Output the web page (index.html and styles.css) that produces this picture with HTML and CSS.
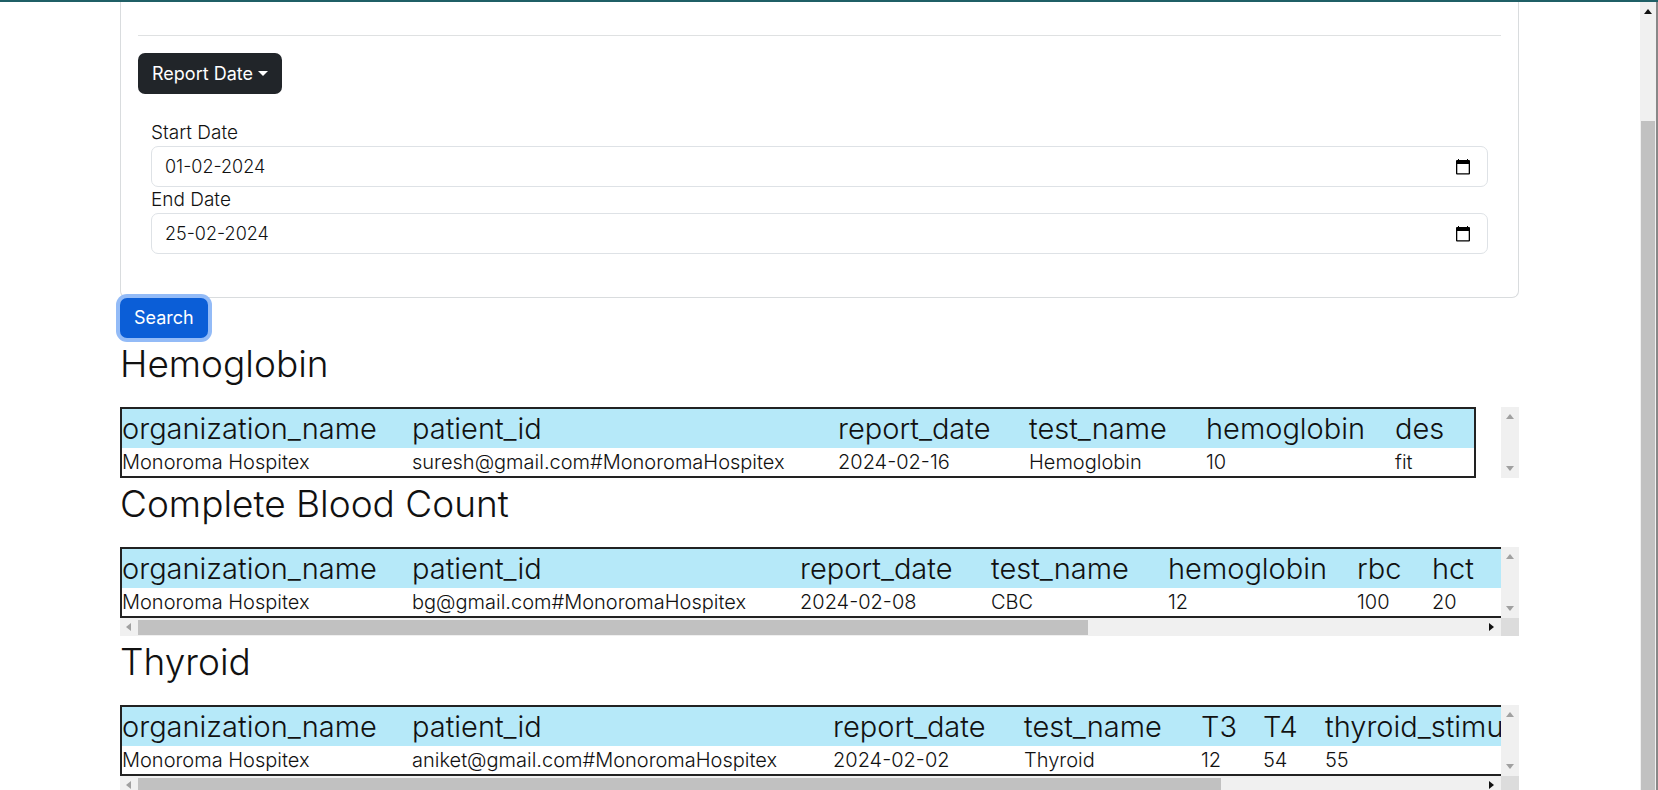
FILE: index.html
```html
<!DOCTYPE html>
<html lang="en">
<head>
<meta charset="utf-8">
<title>Report Search</title>
<link rel="stylesheet" href="styles.css">
</head>
<body>
<div class="page">
  <main class="content">
    <section class="filters">
      <hr class="divider">
      <button class="btn btn-dark" type="button">Report Date<span class="caret"></span></button>
      <div class="dates">
        <label class="label" for="start">Start Date</label>
        <div class="field">
          <input id="start" class="input" type="text" value="01-02-2024">
          <button class="picker" type="button" aria-label="Choose start date"><svg width="16" height="18" viewBox="0 0 16 18"><path fill="#000" fill-rule="evenodd" d="M3 1h1v1h8V1h1v1h1q1 0 1 1v12.500q0 1-1 1H2q-1 0-1-1V3q0-1 1-1h1zM2.300 6v9.200h11.400V6z"/></svg></button>
        </div>
        <label class="label" for="end">End Date</label>
        <div class="field">
          <input id="end" class="input" type="text" value="25-02-2024">
          <button class="picker" type="button" aria-label="Choose end date"><svg width="16" height="18" viewBox="0 0 16 18"><path fill="#000" fill-rule="evenodd" d="M3 1h1v1h8V1h1v1h1q1 0 1 1v12.500q0 1-1 1H2q-1 0-1-1V3q0-1 1-1h1zM2.300 6v9.200h11.400V6z"/></svg></button>
        </div>
      </div>
    </section>
    <button class="btn btn-search" type="button">Search</button>

    <h2 class="title">Hemoglobin</h2>
    <div class="scroller">
      <div class="view">
        <table class="report">
          <colgroup><col class="c-org"><col class="c-id-long"><col class="c-date"><col class="c-test"><col class="c-hemo"><col class="c-last"></colgroup>
          <thead><tr><th>organization_name</th><th>patient_id</th><th>report_date</th><th>test_name</th><th>hemoglobin</th><th>des</th></tr></thead>
          <tbody><tr><td>Monoroma Hospitex</td><td>suresh@gmail.com#MonoromaHospitex</td><td>2024-02-16</td><td>Hemoglobin</td><td>10</td><td>fit</td></tr></tbody>
        </table>
      </div>
      <div class="vbar" aria-hidden="true"><i class="arrow up"></i><i class="arrow down"></i></div>
    </div>

    <h2 class="title">Complete Blood Count</h2>
    <div class="scroller">
      <div class="view">
        <table class="report">
          <colgroup><col class="c-org"><col class="c-id-short"><col class="c-date"><col class="c-test"><col class="c-hemo"><col class="c-rbc"><col class="c-wide"></colgroup>
          <thead><tr><th>organization_name</th><th>patient_id</th><th>report_date</th><th>test_name</th><th>hemoglobin</th><th>rbc</th><th>hct</th></tr></thead>
          <tbody><tr><td>Monoroma Hospitex</td><td>bg@gmail.com#MonoromaHospitex</td><td>2024-02-08</td><td>CBC</td><td>12</td><td>100</td><td>20</td></tr></tbody>
        </table>
      </div>
      <div class="vbar" aria-hidden="true"><i class="arrow up"></i><i class="arrow down"></i></div>
      <div class="hbar" aria-hidden="true"><i class="arrow left"></i><div class="track"><div class="thumb" style="width:70.700%"></div></div><i class="arrow right"></i></div>
      <div class="corner"></div>
    </div>

    <h2 class="title">Thyroid</h2>
    <div class="scroller">
      <div class="view">
        <table class="report">
          <colgroup><col class="c-org"><col class="c-id"><col class="c-date"><col class="c-test"><col class="c-t"><col class="c-t"><col class="c-wide"></colgroup>
          <thead><tr><th>organization_name</th><th>patient_id</th><th>report_date</th><th>test_name</th><th>T3</th><th>T4</th><th>thyroid_stimulating</th></tr></thead>
          <tbody><tr><td>Monoroma Hospitex</td><td>aniket@gmail.com#MonoromaHospitex</td><td>2024-02-02</td><td>Thyroid</td><td>12</td><td>54</td><td>55</td></tr></tbody>
        </table>
      </div>
      <div class="vbar" aria-hidden="true"><i class="arrow up"></i><i class="arrow down"></i></div>
      <div class="hbar" aria-hidden="true"><i class="arrow left"></i><div class="track"><div class="thumb" style="width:80.600%"></div></div><i class="arrow right"></i></div>
      <div class="corner"></div>
    </div>
  </main>
  <div class="page-bar" aria-hidden="true"><i class="arrow up dark"></i><div class="page-thumb"></div></div>
</div>
</body>
</html>
```

FILE: styles.css
```css
* { box-sizing: border-box; }
body {
  margin: 0;
  background: #fff;
  color: #111;
  font: 300 18px/24px Inter, "Open Sans", sans-serif;
}
.page {
  display: flex;
  height: 100vh;
  overflow: hidden;
  border-top: 2px solid #1f5f66;
}
.content {
  flex: 1;
  min-width: 0;
  max-width: 1640px;
  padding: 0 121px 0 120px;
}
.filters {
  padding: 33px 17px 43px;
  border: 1px solid #d9dcde;
  border-top: 0;
  border-radius: 0 0 7px 7px;
}
.divider { margin: 0 0 17px; border: 0; border-top: 1px solid #dfe1e2; }
.btn {
  display: inline-flex;
  align-items: center;
  height: 41px;
  padding: 0 14px;
  border: 0;
  border-radius: 7px;
  color: #fff;
  font: 400 18px/24px Inter, "Open Sans", sans-serif;
}
.btn-dark { background: #212529; }
.caret {
  margin-left: 5px;
  border: 5px solid transparent;
  border-top-color: #fff;
  border-bottom: 0;
}
.btn-search { display: flex; height: 40px; background: #0b5ed7; box-shadow: 0 0 0 4px #93bbf7; }
.dates { padding: 26px 13px 0; }
.label { display: block; height: 26px; line-height: 26px; font-size: 19px; }
.field {
  display: flex;
  align-items: center;
  height: 41px;
  padding: 0 16px 0 13px;
  border: 1px solid #dee2e6;
  border-radius: 7px;
}
.input {
  flex: 1;
  min-width: 0;
  padding: 0;
  border: 0;
  outline: 0;
  background: none;
  color: #111;
  font: inherit;
}
.picker { display: flex; padding: 0; border: 0; background: none; }
.title {
  margin: 0 0 17px;
  color: #111;
  font-size: 37px;
  font-weight: 300;
  line-height: 52px;
}
.scroller { display: grid; grid-template-columns: minmax(0, 1fr) 18px; }
.view { overflow: hidden; }
.report {
  width: 0;
  table-layout: fixed;
  border: 2px solid #222;
  border-spacing: 0;
  white-space: nowrap;
}
.report th, .report td { padding: 0; text-align: left; font-weight: 300; }
.report th { height: 39px; background: #b6e9f9; font-size: 29px; line-height: 39px; }
.report td { height: 28px; font-size: 20px; line-height: 28px; }
.c-org { width: 290px; }
.c-id-long { width: 426px; }
.c-id { width: 421px; }
.c-id-short { width: 388px; }
.c-date { width: 191px; }
.c-test { width: 177px; }
.c-hemo { width: 189px; }
.c-last { width: 79px; }
.c-rbc { width: 75px; }
.c-t { width: 62px; }
.c-wide { width: 480px; }
.vbar {
  display: flex;
  flex-direction: column;
  justify-content: space-between;
  align-items: center;
  padding: 7px 0;
  background: #f0f0f0;
}
.hbar {
  display: flex;
  justify-content: space-between;
  align-items: center;
  height: 18px;
  padding: 0 7px 0 6px;
  background: #f0f0f0;
}
.track { flex: 1; margin: 0 7px; }
.thumb { height: 15px; background: #c1c1c1; }
.corner { background: #dcdcdc; }
.arrow { width: 0; height: 0; border: 4px solid transparent; }
.up { border-top: 0; border-bottom: 5px solid #a0a0a0; }
.down { border-bottom: 0; border-top: 5px solid #a0a0a0; }
.left { border-left: 0; border-right: 5px solid #a0a0a0; }
.right { border-right: 0; border-left: 5px solid #111; }
.dark { border-bottom-color: #111; }
.page-bar {
  display: flex;
  flex-direction: column;
  align-items: center;
  gap: 107px;
  width: 18px;
  margin-left: auto;
  padding-top: 7px;
  border-right: 2px solid #888;
  background: #f0f0f0;
}
.page-thumb { flex: 1; width: 14px; background: #c1c1c1; }
```
